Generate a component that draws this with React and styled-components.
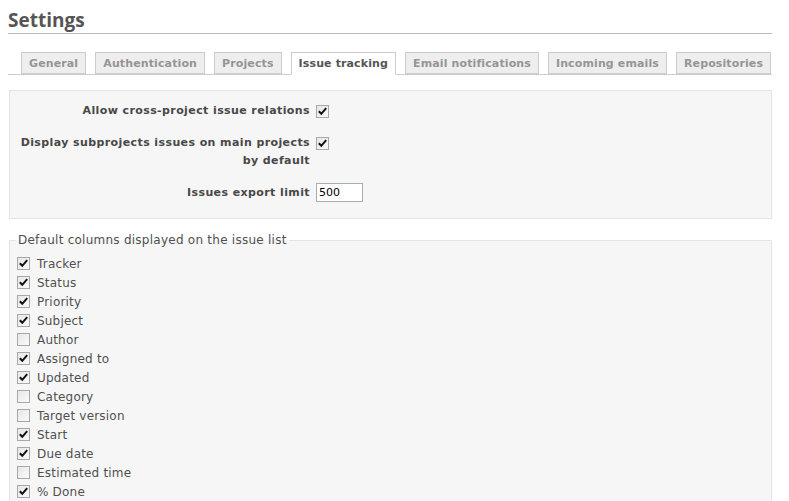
import React from 'react';
import styled, { createGlobalStyle } from 'styled-components';

const GlobalStyle = createGlobalStyle`
  html, body {
    margin: 0;
    padding: 0;
    background: #fff;
  }
  body {
    font-family: "DejaVu Sans", Verdana, sans-serif;
    font-size: 12px;
    color: #505050;
  }
`;

const Page = styled.div`
  padding: 8px 17px 0 8px;
  width: 764px;
`;

const Heading = styled.h2`
  margin: 0;
  padding: 2px 0 3px 0;
  font-family: "Open Sans", "DejaVu Sans", sans-serif;
  font-size: 19px;
  font-weight: 700;
  line-height: 20px;
  color: #555;
  border-bottom: 1px solid #bbb;
`;

const Tabs = styled.ul`
  display: flex;
  align-items: flex-end;
  gap: 9px;
  list-style: none;
  margin: 18px 0 0 0;
  padding: 0 0 0 13px;
  height: 22px;
  border-bottom: 1px solid #ccc;
`;

const Tab = styled.li`
  box-sizing: border-box;
  height: ${p => (p.$active ? '23px' : '22px')};
  margin-bottom: ${p => (p.$active ? '-1px' : '0')};
  padding: 0 7px;
  display: flex;
  align-items: center;
  font-size: 11px;
  font-weight: bold;
  letter-spacing: 0.12px;
  color: ${p => (p.$active ? '#555' : '#959595')};
  background: ${p => (p.$active ? '#fff' : '#eee')};
  border: 1px solid #ccc;
  border-bottom: ${p => (p.$active ? '1px solid #fff' : '1px solid #ccc')};
  white-space: nowrap;
`;

const Box = styled.div`
  margin: 15px 0 0 1px;
  padding: 4px 6px 9px;
  background: #f6f6f6;
  border: 1px solid #e4e4e4;
`;

const Row = styled.div`
  display: flex;
  align-items: flex-start;
  padding: 7px 0;
`;

const Label = styled.label`
  width: 294px;
  padding-right: 6px;
  text-align: right;
  font-size: 11px;
  font-weight: bold;
  letter-spacing: 0.4px;
  line-height: 18px;
  color: #484848;
`;

const Field = styled.div`
  display: flex;
  align-items: center;
  min-height: 18px;
`;

const Check = styled.span`
  box-sizing: border-box;
  display: inline-flex;
  align-items: center;
  justify-content: center;
  width: 13px;
  height: 13px;
  border: 1px solid #a8a8a8;
  background: linear-gradient(135deg, #e6e6e6 0%, #fbfbfb 100%);
  flex-shrink: 0;
`;

const TextInput = styled.input`
  box-sizing: border-box;
  width: 47px;
  height: 19px;
  margin: -1px 0 0 0;
  padding: 1px 2px;
  border: 1px solid #a5acb2;
  font-family: "DejaVu Sans", Verdana, sans-serif;
  font-size: 11px;
  color: #000;
  background: #fff;
  outline: none;
`;

const FieldSet = styled.fieldset`
  margin: 13px 0 0 1px;
  padding: 6px 7px 10px;
  background: #f6f6f6;
  border: 1px solid #e4e4e4;
  min-height: 300px;
`;

const Legend = styled.legend`
  margin-left: -1px;
  padding: 0 2px;
  font-size: 12px;
  letter-spacing: 0.25px;
  line-height: 16px;
  color: #505050;
`;

const ColumnRow = styled.div`
  display: flex;
  align-items: center;
  gap: 7px;
  height: 19px;
  font-size: 12px;
  letter-spacing: 0.2px;
  color: #505050;
`;

function Checkbox({ checked }) {
  return (
    <Check>
      {checked && (
        <svg width="9" height="9" viewBox="0 0 9 9">
          <path d="M0.8 4.2 L3.3 6.8 L8.2 1.2" fill="none" stroke="#111" strokeWidth="2" />
        </svg>
      )}
    </Check>
  );
}

const tabs = [
  'General',
  'Authentication',
  'Projects',
  'Issue tracking',
  'Email notifications',
  'Incoming emails',
  'Repositories',
];

const columns = [
  ['Tracker', true],
  ['Status', true],
  ['Priority', true],
  ['Subject', true],
  ['Author', false],
  ['Assigned to', true],
  ['Updated', true],
  ['Category', false],
  ['Target version', false],
  ['Start', true],
  ['Due date', true],
  ['Estimated time', false],
  ['% Done', true],
];

export default function App() {
  return (
    <Page>
      <GlobalStyle />
      <Heading>Settings</Heading>

      <Tabs>
        {tabs.map(t => (
          <Tab key={t} $active={t === 'Issue tracking'}>{t}</Tab>
        ))}
      </Tabs>

      <Box>
        <Row>
          <Label>Allow cross-project issue relations</Label>
          <Field><Checkbox checked /></Field>
        </Row>
        <Row>
          <Label>Display subprojects issues on main projects by default</Label>
          <Field><Checkbox checked /></Field>
        </Row>
        <Row>
          <Label>Issues export limit</Label>
          <Field><TextInput defaultValue="500" /></Field>
        </Row>
      </Box>

      <FieldSet>
        <Legend>Default columns displayed on the issue list</Legend>
        {columns.map(([name, on]) => (
          <ColumnRow key={name}>
            <Checkbox checked={on} />
            {name}
          </ColumnRow>
        ))}
      </FieldSet>
    </Page>
  );
}
